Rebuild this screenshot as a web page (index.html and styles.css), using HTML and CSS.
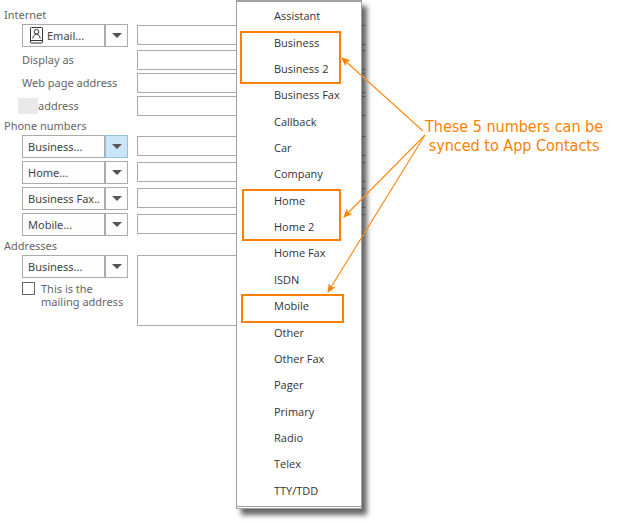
FILE: index.html
```html
<!DOCTYPE html>
<html lang="en">
<head>
    <meta charset="UTF-8">
    <title>Contact</title>
    <link rel="stylesheet" href="styles.css">
</head>
<body>
    <form class="contact" action="#" method="get">
        <!-- Internet -->
        <section class="group">
            <h2>Internet</h2>
            <div class="row">
                <div class="split">
                    <button type="button" class="split-main">
                        <svg class="book" width="13" height="17" viewBox="0 0 13 17" fill="none" stroke="#333">
                            <rect x=".5" y=".5" width="12" height="15.5" rx="1"/>
                            <path d="M.5 13.5h12"/>
                            <circle cx="6.5" cy="4.8" r="2.3"/>
                            <path d="M2.8 11.5c.3-2.4 1.6-4.2 3.7-4.2s3.4 1.8 3.7 4.2"/>
                        </svg>
                        Email...
                    </button>
                    <button type="button" class="split-arrow" aria-label="Choose email"></button>
                </div>
                <input type="text" aria-label="Email">
            </div>
            <div class="row">
                <label for="display">Display as</label>
                <input id="display" type="text">
            </div>
            <div class="row">
                <label for="web">Web page address</label>
                <input id="web" type="text">
            </div>
            <div class="row">
                <label for="im" class="masked"><span class="mask"></span>address</label>
                <input id="im" type="text">
            </div>
        </section>
        <!-- Phone numbers -->
        <section class="group">
            <h2>Phone numbers</h2>
            <div class="row">
                <div class="split">
                    <button type="button" class="split-main">Business...</button>
                    <button type="button" class="split-arrow active" aria-label="Choose first number" aria-expanded="true"></button>
                </div>
                <input type="text" aria-label="Business">
            </div>
            <div class="row">
                <div class="split">
                    <button type="button" class="split-main">Home...</button>
                    <button type="button" class="split-arrow" aria-label="Choose second number"></button>
                </div>
                <input type="text" aria-label="Home">
            </div>
            <div class="row">
                <div class="split">
                    <button type="button" class="split-main">Business Fax..</button>
                    <button type="button" class="split-arrow" aria-label="Choose third number"></button>
                </div>
                <input type="text" aria-label="Business Fax">
            </div>
            <div class="row">
                <div class="split">
                    <button type="button" class="split-main">Mobile...</button>
                    <button type="button" class="split-arrow" aria-label="Choose fourth number"></button>
                </div>
                <input type="text" aria-label="Mobile">
            </div>
        </section>
        <!-- Addresses -->
        <section class="group">
            <h2>Addresses</h2>
            <div class="row">
                <div>
                    <div class="split">
                        <button type="button" class="split-main">Business...</button>
                        <button type="button" class="split-arrow" aria-label="Choose address"></button>
                    </div>
                    <div class="mailing">
                        <input id="mailing" type="checkbox">
                        <label for="mailing">This is the<br>mailing address</label>
                    </div>
                </div>
                <textarea aria-label="Address"></textarea>
            </div>
        </section>
    </form>

    <!-- number type menu -->
    <ul class="menu">
        <li><button type="button">Assistant</button></li>
        <li><button type="button">Business</button></li>
        <li><button type="button">Business 2</button></li>
        <li><button type="button">Business Fax</button></li>
        <li><button type="button">Callback</button></li>
        <li><button type="button">Car</button></li>
        <li><button type="button">Company</button></li>
        <li><button type="button">Home</button></li>
        <li><button type="button">Home 2</button></li>
        <li><button type="button">Home Fax</button></li>
        <li><button type="button">ISDN</button></li>
        <li><button type="button">Mobile</button></li>
        <li><button type="button">Other</button></li>
        <li><button type="button">Other Fax</button></li>
        <li><button type="button">Pager</button></li>
        <li><button type="button">Primary</button></li>
        <li><button type="button">Radio</button></li>
        <li><button type="button">Telex</button></li>
        <li><button type="button">TTY/TDD</button></li>
    </ul>

    <!-- callout boxes and arrows -->
    <svg class="marks" width="430" height="330" viewBox="0 0 430 330">
        <defs>
            <marker id="tip" viewBox="0 0 9 8" refX="8" refY="4" markerWidth="9" markerHeight="8" markerUnits="userSpaceOnUse" orient="auto">
                <path d="M0 0L9 4L0 8L2 4Z" fill="#ff8000"/>
            </marker>
        </defs>
        <g fill="none" stroke="#ff8000" stroke-width="2">
            <rect x="241" y="32" width="99" height="51"/>
            <rect x="243" y="190" width="97" height="50"/>
            <rect x="242" y="295" width="101" height="27"/>
        </g>
        <g stroke="#ff8c1a" stroke-width="1.2">
            <path d="M423 131L342 58" marker-end="url(#tip)"/>
            <path d="M425 135L344 217" marker-end="url(#tip)"/>
            <path d="M425 135L328 292" marker-end="url(#tip)"/>
        </g>
    </svg>
    <p class="note">These 5 numbers can be<br>synced to App Contacts</p>
</body>
</html>
```
FILE: styles.css
```css
*{
    margin: 0;
    padding: 0;
    box-sizing: border-box;
}
body{
    position: relative;
    min-height: 100vh;
    background: #fff;
    color: #666;
    font: 11px/18px "Noto Sans", "Open Sans", sans-serif;
}
button, input, textarea{
    font: inherit;
    color: #444;
    border: 1px solid #ababab;
    border-radius: 0;
    background: #fff;
}
.contact{
    max-width: 366px;
    padding: 6px 0 0 4px;
}
.group{
    display: flex;
    flex-direction: column;
    gap: 3px;
    padding-bottom: 1px;
}
h2{
    font-size: 11px;
    font-weight: normal;
    line-height: 18px;
    margin-bottom: -3px;
}
.row{
    display: grid;
    grid-template-columns: 106px 1fr;
    column-gap: 9px;
    padding-left: 18px;
}
.row > input{
    width: 100%;
    height: 20px;
    border-right-color: #fff;
}
.row > label{
    line-height: 20px;
    white-space: nowrap;
}
.split + input{
    margin-top: 1px;
}
.split{
    display: flex;
    height: 23px;
}
.split-main{
    flex: 1;
    display: flex;
    align-items: center;
    padding-left: 5px;
    background: #fdfdfd;
    white-space: nowrap;
}
.book{
    margin: 0 4px 0 2px;
}
.split-arrow{
    display: flex;
    align-items: center;
    justify-content: center;
    width: 23px;
    background: #fdfdfd;
}
.split-arrow::after{
    content: "";
    border: solid transparent;
    border-width: 5px 5px 0;
    border-top-color: #555;
}
.active{
    background: #cce4f7;
    border-color: #92c0e0;
}
.masked{
    display: flex;
    align-items: center;
    margin-left: -4px;
}
.mask{
    width: 20px;
    height: 16px;
    background: #e9e9e9;
}
.mailing{
    display: flex;
    gap: 6px;
    padding-top: 4px;
    line-height: 13px;
    white-space: nowrap;
}
.mailing input{
    appearance: none;
    width: 13px;
    height: 13px;
    border-color: #666;
}
textarea{
    width: 100px;
    height: 71px;
    resize: none;
}
.menu{
    position: absolute;
    top: 0;
    left: 236px;
    width: 126px;
    height: 509px;
    display: grid;
    grid-auto-rows: 1fr;
    padding: 1px 0 2px;
    list-style: none;
    background: #fff;
    border: 1px solid #a0a0a0;
    border-width: 2px 1px 3px;
    border-bottom-style: double;
    box-shadow: 5px 6px 5px rgba(0, 0, 0, 0.6);
}
.menu li{
    display: flex;
}
.menu button{
    flex: 1;
    padding-left: 37px;
    border: 0;
    background: none;
    color: #333;
    font-family: "Open Sans", "Noto Sans", sans-serif;
    text-align: left;
}
.marks{
    position: absolute;
    top: 0;
    left: 0;
    pointer-events: none;
}
.note{
    position: absolute;
    top: 117px;
    left: 425px;
    color: #ff8000;
    font: 16px/19px "DejaVu Sans Condensed", "Noto Sans", sans-serif;
    text-align: center;
    white-space: nowrap;
}
```
